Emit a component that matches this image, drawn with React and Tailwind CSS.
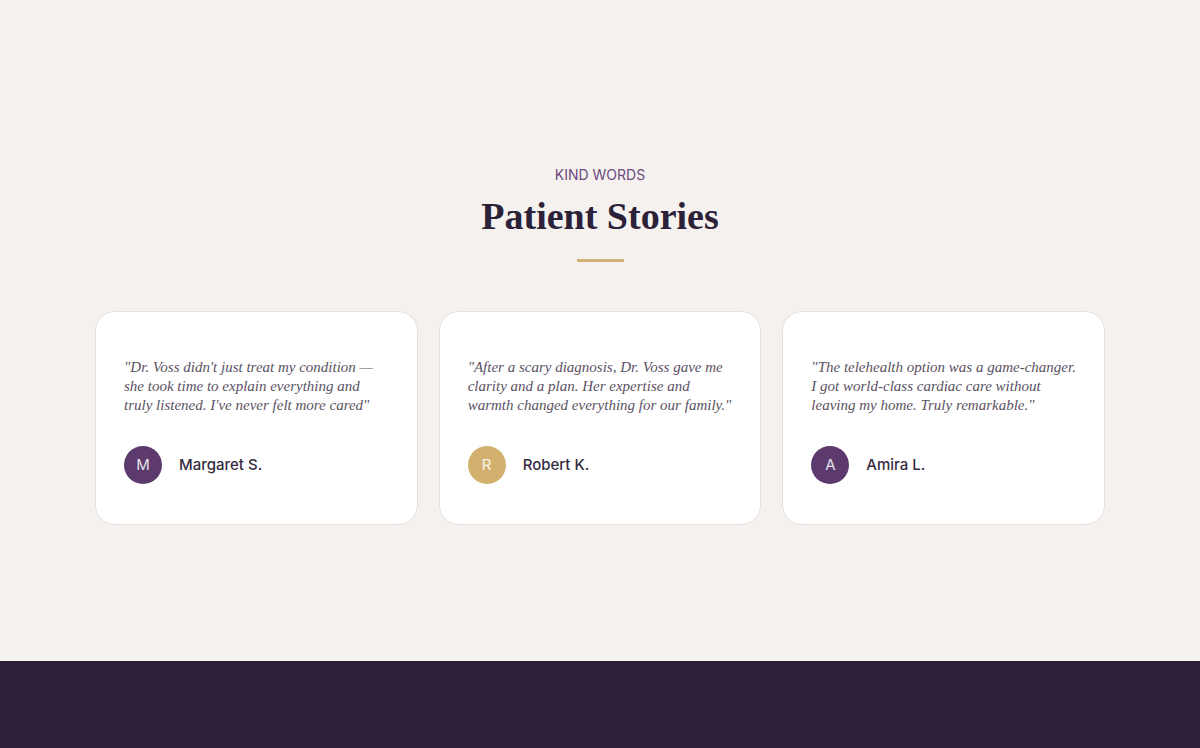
import React from 'react';

const stories = [
  {
    lines: [
      '"Dr. Voss didn\'t just treat my condition —',
      'she took time to explain everything and',
      'truly listened. I\'ve never felt more cared"',
    ],
    name: 'Margaret S.',
    initial: 'M',
    color: 'bg-[#5c3a6e]',
  },
  {
    lines: [
      '"After a scary diagnosis, Dr. Voss gave me',
      'clarity and a plan. Her expertise and',
      'warmth changed everything for our family."',
    ],
    name: 'Robert K.',
    initial: 'R',
    color: 'bg-[#d2b16f]',
  },
  {
    lines: [
      '"The telehealth option was a game-changer.',
      'I got world-class cardiac care without',
      'leaving my home. Truly remarkable."',
    ],
    name: 'Amira L.',
    initial: 'A',
    color: 'bg-[#5c3a6e]',
  },
];

function StoryCard({ story }) {
  return (
    <div className="bg-white border border-[#e6e0dd] rounded-[20px] pt-[46px] pb-[40px] px-[28px]">
      <p className="font-['Liberation_Serif',serif] italic text-[15px] leading-[19px] text-[#5b5263] whitespace-nowrap">
        {story.lines.map((line, i) => (
          <span key={i} className="block">{line}</span>
        ))}
      </p>
      <div className="flex items-center gap-[17px] mt-[31px]">
        <div className={`w-[38px] h-[38px] rounded-full ${story.color} flex items-center justify-center text-white/85 text-[15px] font-['Inter',sans-serif]`}>
          {story.initial}
        </div>
        <span className="font-['Inter',sans-serif] text-[15px] font-medium text-[#352c3f]">{story.name}</span>
      </div>
    </div>
  );
}

export default function App() {
  return (
    <div className="min-h-screen bg-[#f5f1ee]">
      <section className="h-[661px] pt-[165px] flex flex-col items-center">
        <span className="font-['Inter',sans-serif] text-[14px] leading-[20px] text-[#6b4a80]">
          KIND WORDS
        </span>
        <h2 className="mt-[7px] font-['Liberation_Serif',serif] font-bold text-[38px] leading-[48px] text-[#2b2139]">
          Patient Stories
        </h2>
        <div className="mt-[19px] w-[47px] h-[3px] bg-[#d4b277]" />
        <div className="mt-[49px] grid grid-cols-3 gap-[21px] w-[1010px]">
          {stories.map((s) => (
            <StoryCard key={s.name} story={s} />
          ))}
        </div>
      </section>
      <footer className="h-[87px] bg-[#2d1e3a]" />
    </div>
  );
}
